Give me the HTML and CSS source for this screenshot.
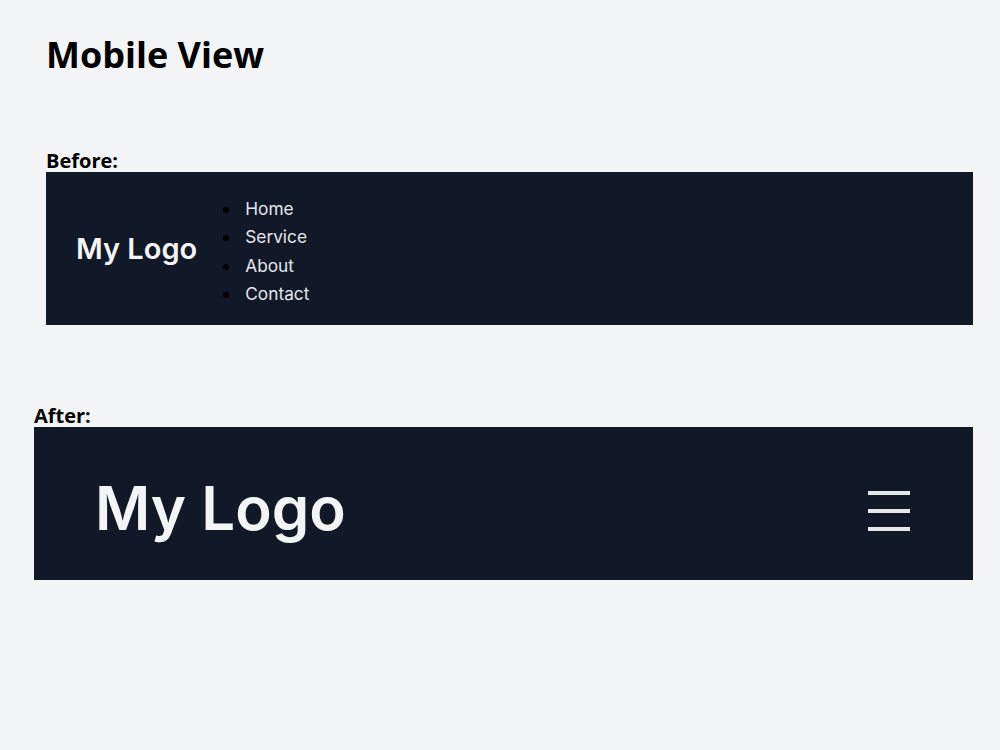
FILE: index.html
```html
<!DOCTYPE html>
<html lang="en">

<head>
    <meta charset="UTF-8">
    <meta name="viewport" content="width=device-width, initial-scale=1.0">
    <title>Mobile View</title>
    <link rel="stylesheet" href="styles.css">
</head>

<body>
    <div class="page">
        <h1 class="page-title">Mobile View</h1>

        <!-- 原本的導覽列：清單直接排在 logo 旁邊 -->
        <section class="demo demo-before">
            <h3 class="label">Before:</h3>
            <nav class="navbar">
                <span class="logo">My Logo</span>
                <ul class="menu">
                    <li><a href="#">Home</a></li>
                    <li><a href="#">Service</a></li>
                    <li><a href="#">About</a></li>
                    <li><a href="#">Contact</a></li>
                </ul>
            </nav>
        </section>

        <!-- 修改後：手機版收成漢堡選單 -->
        <section class="demo demo-after">
            <h3 class="label">After:</h3>
            <nav class="navbar navbar-mobile">
                <span class="logo logo-big">My Logo</span>
                <button type="button" class="burger" aria-label="menu">
                    <span></span>
                    <span></span>
                    <span></span>
                </button>
            </nav>
        </section>
    </div>
</body>

</html>
```

FILE: styles.css
```css
body {
    margin: 0;
    background-color: #f3f4f6;
    font-family: "Open Sans", sans-serif;
    color: #000;
}

.page {
    display: flex;
    flex-direction: column;
    padding-top: 30px;
}

.page-title {
    margin: 0 0 0 46px;
    font-size: 36px;
    font-weight: 700;
}

.demo {
    display: flex;
    flex-direction: column;
    margin-right: 27px;
}

.demo-before {
    margin-top: 70px;
    margin-left: 46px;
}

.demo-after {
    margin-top: 79px;
    margin-left: 34px;
}

.label {
    margin: 0;
    font-size: 20px;
    line-height: 23px;
    font-weight: 700;
}

.navbar {
    background-color: #111827;
    height: 153px;
    display: flex;
    align-items: center;
    font-family: Inter, sans-serif;
}

.logo {
    color: #f3f4f6;
    font-family: Inter, sans-serif;
    font-size: 29px;
    font-weight: 600;
    margin-left: 30px;
    margin-right: 30px;
}

.menu {
    margin: 6px 0 0 0;
    padding-left: 14px;
    color: #000;
}

.menu li {
    font-size: 17.3px;
    line-height: 28.5px;
    padding-left: 4px;
}

.menu a {
    color: #e5e7eb;
    text-decoration: none;
}

.navbar-mobile {
    justify-content: space-between;
}

.logo-big {
    font-size: 60px;
    margin-left: 61px;
    margin-top: 8px;
}

.burger {
    display: flex;
    flex-direction: column;
    gap: 14px;
    background: none;
    border: none;
    padding: 0;
    margin-right: 63px;
    margin-top: 14px;
}

.burger span {
    display: block;
    width: 42px;
    height: 4px;
    background-color: #e5e7eb;
}
```
